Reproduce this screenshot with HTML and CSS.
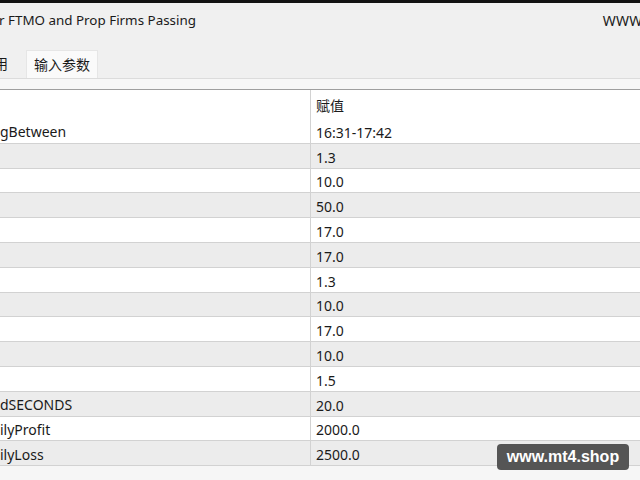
FILE: index.html
```html
<!DOCTYPE html>
<html lang="zh">
<head>
<meta charset="utf-8">
<link rel="stylesheet" href="styles.css">
</head>
<body>
<div class="window">
  <div class="topbar"></div>
  <div class="titlebar">
    <span class="title">r FTMO and Prop Firms Passing</span>
    <span class="site">WWW.MT4.SHOP</span>
  </div>
  <div class="tabs">
    <span class="tab tab-prev">常用</span>
    <span class="tab tab-active">输入参数</span>
  </div>
  <div class="tab-gap"></div>
  <div class="table">
    <div class="row head"><span class="name"></span><span class="val">赋值</span></div>
    <div class="row"><span class="name">gBetween</span><span class="val">16:31-17:42</span></div>
    <div class="row alt"><span class="name"></span><span class="val">1.3</span></div>
    <div class="row"><span class="name"></span><span class="val">10.0</span></div>
    <div class="row alt"><span class="name"></span><span class="val">50.0</span></div>
    <div class="row"><span class="name"></span><span class="val">17.0</span></div>
    <div class="row alt"><span class="name"></span><span class="val">17.0</span></div>
    <div class="row"><span class="name"></span><span class="val">1.3</span></div>
    <div class="row alt"><span class="name"></span><span class="val">10.0</span></div>
    <div class="row"><span class="name"></span><span class="val">17.0</span></div>
    <div class="row alt"><span class="name"></span><span class="val">10.0</span></div>
    <div class="row"><span class="name"></span><span class="val">1.5</span></div>
    <div class="row alt"><span class="name">dSECONDS</span><span class="val">20.0</span></div>
    <div class="row"><span class="name">ilyProfit</span><span class="val">2000.0</span></div>
    <div class="row alt"><span class="name">ilyLoss</span><span class="val">2500.0</span></div>
  </div>
  <div class="watermark">www.mt4.shop</div>
</div>
</body>
</html>
```
FILE: styles.css
```css
html, body {
  margin: 0;
  padding: 0;
  width: 640px;
  height: 480px;
  overflow: hidden;
  background: #f6f6f6;
}
.window {
  position: relative;
  width: 640px;
  height: 480px;
  overflow: hidden;
  font-family: "Noto Sans", "Noto Sans CJK SC", sans-serif;
  font-size: 14px;
  color: #1a1a1a;
  background: #f6f6f6;
}
.topbar {
  height: 3px;
  background: #121212;
}
.titlebar {
  height: 40px;
  box-sizing: border-box;
  padding-bottom: 6px;
  display: flex;
  justify-content: space-between;
  align-items: center;
  background: #f0f0f0;
  white-space: nowrap;
}
.title {
  margin-left: -1px;
  font-size: 13.4px;
}
.site {
  margin-right: -77px;
  letter-spacing: 0.2px;
}
.tabs {
  height: 35px;
  display: flex;
  align-items: flex-end;
  background: #f0f0f0;
  border-bottom: 1px solid #dcdcdc;
  font-family: "Noto Sans CJK SC", sans-serif;
}
.tab {
  height: 28px;
  display: flex;
  align-items: center;
  box-sizing: border-box;
  white-space: nowrap;
  padding-bottom: 2px;
}
.tab-prev {
  margin-left: -20px;
  width: 46px;
}
.tab-active {
  width: 72px;
  padding-left: 7px;
  background: #fafafa;
  border-top: 1px solid #e6e6e6;
  border-left: 1px solid #e6e6e6;
  border-right: 1px solid #e6e6e6;
}
.tab-gap {
  height: 10px;
  background: #f7f7f7;
  border-bottom: 1px solid #9f9f9f;
}
.table {
  background: #ffffff;
}
.row {
  display: grid;
  grid-template-columns: 311px 1fr;
  height: 24.8px;
  box-sizing: border-box;
  border-bottom: 1px solid #d2d2d2;
  background: #ffffff;
  white-space: nowrap;
}
.row.alt {
  background: #ececec;
}
.row.head {
  height: 29px;
  border-bottom: none;
  font-family: "Noto Sans CJK SC", sans-serif;
}
.name {
  display: flex;
  align-items: center;
  padding-top: 2px;
  border-right: 1px solid #d2d2d2;
  overflow: hidden;
}
.val {
  display: flex;
  align-items: center;
  padding-top: 3px;
  padding-left: 5px;
}
.row.head .val {
  padding-top: 0;
}
.watermark {
  position: absolute;
  left: 497px;
  top: 444px;
  width: 132px;
  height: 26px;
  box-sizing: border-box;
  border-radius: 4px;
  background: #555555;
  color: #ffffff;
  font-family: "Liberation Sans", Arial, sans-serif;
  font-weight: bold;
  font-size: 16px;
  display: flex;
  align-items: center;
  justify-content: center;
}
```
